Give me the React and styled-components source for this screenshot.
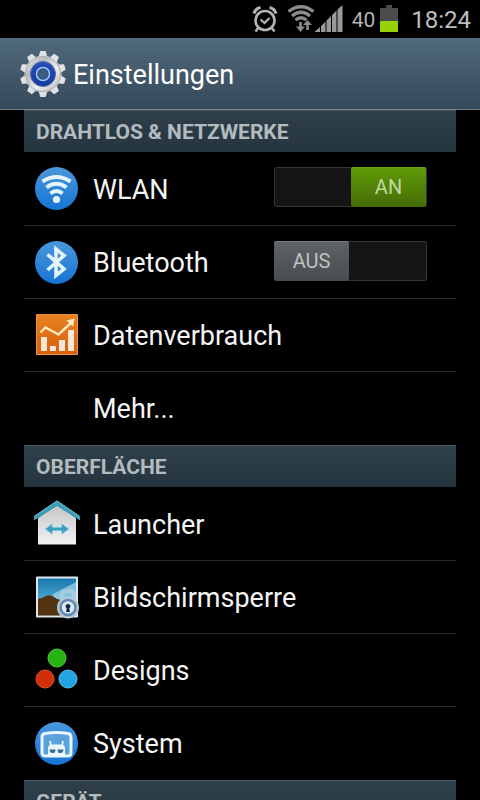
import { useState } from 'react';
import styled, { createGlobalStyle } from 'styled-components';

const GlobalStyle = createGlobalStyle`
    * {
        box-sizing: border-box;
    }
    body {
        margin: 0;
        background: #000;
        font-family: Roboto, "Liberation Sans", sans-serif;
    }
`
const Screen = styled.div`
    height: 100vh;
    display: flex;
    flex-direction: column;
    overflow: hidden;
    background: #000;
    color: #f4f4f4;
`
const StatusBar = styled.div`
    flex: none;
    height: 38px;
    padding-right: 9px;
    display: flex;
    align-items: center;
    justify-content: flex-end;
    color: #b4b4b4;
`
const StatusIcons = styled.div`
    display: flex;
    align-items: center;
    margin-right: 9px;
`
const Signals = styled.span`
    display: flex;
    margin-left: 9px;
`
const BatteryLevel = styled.span`
    padding-top: 2px;
    font-size: 21px;
    line-height: 24px;
    margin-right: 5px;
`
const Clock = styled.time`
    padding-top: 2px;
    font-size: 24px;
    line-height: 28px;
    margin-left: 13px;
    color: #bebebe;
`
const Header = styled.header`
    flex: none;
    height: 72px;
    padding-left: 20px;
    display: flex;
    align-items: center;
    gap: 7px;
    background: linear-gradient(#506a7b, #34485a);
    border-top: 1px solid #54707e;
    border-bottom: 1px solid #75838c;
`
const Title = styled.h1`
    margin: 0;
    padding-top: 2px;
    font-size: 27px;
    line-height: 32px;
    font-weight: 400;
    color: #fff;
`
const List = styled.main`
    flex: 1;
    min-height: 0;
    padding: 0 24px;
    overflow-y: auto;
    scrollbar-width: none;
`
const SectionTitle = styled.h2`
    height: 42px;
    margin: 0;
    padding: 2px 12px 0;
    font-size: 21px;
    line-height: 38px;
    font-weight: 700;
    color: #b3bbbf;
    background: linear-gradient(#2f404b, #24353e);
    border-top: 1px solid #46555e;
`
const Rows = styled.ul`
    margin: 0;
    padding: 0 0 1px;
    list-style: none;
`
const Row = styled.li`
    display: flex;
    align-items: center;
    height: 73px;
    padding-right: 29px;

    & + & {
        border-top: 1px solid #2b2b2b;
    }
`
const RowButton = styled.button`
    flex: 1;
    height: 100%;
    padding: 0 0 0 9px;
    display: flex;
    align-items: center;
    gap: 13px;
    border: none;
    background: none;
    color: inherit;
    font-family: inherit;
    font-size: 27px;
    line-height: 32px;
    text-align: left;
    cursor: pointer;
`
const IconSlot = styled.span`
    flex: none;
    width: 47px;
    height: 47px;
`
const RowLabel = styled.span`
    padding-top: 2px;
`
const Switch = styled.label`
    position: relative;
    display: flex;
    justify-content: ${(props) => (props.$on ? 'flex-end' : 'flex-start')};
    width: 153px;
    height: 40px;
    margin-bottom: 3px;
    padding-right: 1px;
    background: #151515;
    box-shadow: inset 0 0 0 1px #353535;
    border-radius: 3px;
    cursor: pointer;
`
const SwitchInput = styled.input`
    position: absolute;
    inset: 0;
    width: 100%;
    height: 100%;
    margin: 0;
    opacity: 0;
    cursor: pointer;
`
const Thumb = styled.span`
    width: 75px;
    border-radius: 3px;
    font-size: 20px;
    line-height: 40px;
    text-align: center;
    color: ${(props) => (props.$on ? '#c0d79d' : '#bfc1c2')};
    background: ${(props) => (props.$on ? 'linear-gradient(#609b06, #446c08)' : 'linear-gradient(#5f6365, #484c4e)')};
    box-shadow: inset 0 1px 0 ${(props) => (props.$on ? '#6ba51a' : '#74787a')};
`

const AlarmIcon = () => (
    <svg width="26" height="28" viewBox="0 0 26 28" fill="none" stroke="currentColor">
        <circle cx="13" cy="15.500" r="9.500" strokeWidth="2.600" />
        <path d="M8.500 14.500l4 3.500 5-5" strokeWidth="2.200" />
        <path d="M2 8.500C3 5 5 3.200 8.500 2.500M24 8.500C23 5 21 3.200 17.500 2.500" strokeWidth="3.200" />
        <path d="M6.500 22.500L3.500 26.500M19.500 22.500l3 4" strokeWidth="2.400" />
    </svg>
)

const WifiStatusIcon = () => (
    <svg width="28" height="28" viewBox="0 0 28 28" fill="none" stroke="#8b8b8b">
        <path d="M1.500 6.500Q14 -3 26.500 6.500M5 11Q14 3.500 23 11M8.500 15Q14 10.500 19.500 15" strokeWidth="3.200" />
        <path d="M13.500 17v6M20.500 25v-6" strokeWidth="2.600" />
        <path d="M9 21.500h9l-4.500 5.500zM16 20h9l-4.500-5z" fill="#8b8b8b" stroke="none" />
    </svg>
)

const SignalIcon = () => (
    <svg width="28" height="28" viewBox="0 0 28 28" fill="#999">
        <path d="M0 27V26.500L5 22V27zM6 27V21L10.500 16.500V27zM11.500 27V15.500L16 11V27zM17 27V10L21.500 5.500V27zM22.500 27V4.500L27.500 0V27z" />
    </svg>
)

const BatteryIcon = () => (
    <svg width="18" height="28" viewBox="0 0 18 28">
        <path d="M6 0h6v3h6v13H0V3h6z" fill="#4b4b4b" />
        <path d="M0 16h18v11H0z" fill="#98d009" />
    </svg>
)

const teeth = [0, 36, 72, 108, 144, 180, 216, 252, 288, 324]

const GearIcon = () => (
    <svg width="46" height="48" viewBox="0 0 46 48">
        <defs>
            <linearGradient id="gearMetal" x1="0" y1="0" x2="1" y2="1">
                <stop offset="0" stopColor="#f4f4f6" />
                <stop offset=".3" stopColor="#b9bbc0" />
                <stop offset=".6" stopColor="#eeeeee" />
                <stop offset="1" stopColor="#b6b4b4" />
            </linearGradient>
            <linearGradient id="gearBlue" x1="0" y1="0" x2="0" y2="1">
                <stop offset="0" stopColor="#2450be" />
                <stop offset="1" stopColor="#183a9c" />
            </linearGradient>
        </defs>
        {teeth.map((angle) => (
            <path key={angle} d="M19.500 6L20.500 1.500h5L26.500 6z" fill="#dfe3e9" stroke="#dfe3e9" strokeLinejoin="round" transform={`rotate(${angle} 23 24)`} />
        ))}
        <circle cx="23" cy="24" r="18.500" fill="#dfe3e9" />
        <circle cx="23" cy="24" r="17.500" fill="url(#gearMetal)" stroke="#a9a7a2" />
        <circle cx="23" cy="24" r="12.500" fill="url(#gearBlue)" stroke="#5269a8" />
        <circle cx="23" cy="24" r="6.500" fill="#24509f" stroke="#9fc5ee" strokeWidth="1.600" />
        <circle cx="23" cy="24" r="4.500" fill="#415c76" />
    </svg>
)

const BlueDisc = ({ id }) => (
    <>
        <defs>
            <linearGradient id={id} x1="0" y1="0" x2="0" y2="1">
                <stop offset="0" stopColor="#4a97dc" />
                <stop offset="1" stopColor="#1674d4" />
            </linearGradient>
        </defs>
        <circle cx="23.500" cy="23.500" r="21.500" fill={`url(#${id})`} />
    </>
)

const WlanIcon = () => (
    <svg width="47" height="47" viewBox="0 0 47 47">
        <BlueDisc id="discWlan" />
        <path d="M9.500 16.500Q23.500 7.500 37.500 16.500M13.500 22.500Q23.500 15 33.500 22.500M17.500 28.500Q23.500 23.500 29.500 28.500" fill="none" stroke="#e4f5fa" strokeWidth="4" />
        <circle cx="23.500" cy="34.500" r="3.600" fill="#e4f5fa" />
    </svg>
)

const BluetoothIcon = () => (
    <svg width="47" height="47" viewBox="0 0 47 47">
        <BlueDisc id="discBluetooth" />
        <path d="M14.500 15.500L31 30l-8 6.500V10l8 6.500L14.500 31" fill="none" stroke="#e4f5fa" strokeWidth="3.600" />
    </svg>
)

const DataIcon = () => (
    <svg width="47" height="47" viewBox="0 0 47 47">
        <defs>
            <linearGradient id="dataOrange" x1="0" y1="0" x2="0" y2="1">
                <stop offset="0" stopColor="#e78222" />
                <stop offset="1" stopColor="#d95f08" />
            </linearGradient>
        </defs>
        <path d="M3.500 2.500h41v40h-41z" fill="url(#dataOrange)" stroke="#e9924a" />
        <path d="M8 25h6v14H8zM17 34h6v5h-6zM26 28h6v11h-6zM35 18h6v21h-6z" fill="#f7e6dc" />
        <path d="M7.500 20.500l5-5 13 7L39 10" fill="none" stroke="#ffe9bd" strokeWidth="2.400" />
        <path d="M33.500 8.500L41.500 6.500 40 14.500z" fill="#ffe9bd" />
    </svg>
)

const LauncherIcon = () => (
    <svg width="47" height="47" viewBox="0 0 47 47">
        <defs>
            <linearGradient id="houseWall" x1="0" y1="0" x2="0" y2="1">
                <stop offset="0" stopColor="#c3c6c8" />
                <stop offset="1" stopColor="#f2f2f2" />
            </linearGradient>
        </defs>
        <path d="M5 18L24 5l19 13v26.500H5z" fill="url(#houseWall)" />
        <path d="M1 16L24 .5 47 16v4.500L24 6 1 20.500z" fill="#3d9cb8" />
        <path d="M2 16L24 1 46 16" fill="none" stroke="#6cc0d5" />
        <path d="M12 29l7.500-5.500v3.700h9v-3.700L36 29l-7.500 5.500v-3.700h-9v3.700z" fill="#399fbd" stroke="#aee0ec" strokeWidth=".6" />
    </svg>
)

const LockScreenIcon = () => (
    <svg width="47" height="47" viewBox="0 0 47 47">
        <defs>
            <linearGradient id="lockSky" x1="0" y1="0" x2="0" y2="1">
                <stop offset="0" stopColor="#1677ad" />
                <stop offset="1" stopColor="#7ec8ec" />
            </linearGradient>
        </defs>
        <rect x="3" y="2.500" width="42" height="41" rx="1" fill="#dfe8ec" />
        <path d="M5 4.500h38v37H5z" fill="url(#lockSky)" />
        <path d="M20 20L43 8v17H20z" fill="#b2e2f5" opacity=".6" />
        <path d="M5 25q5-1 8-3 4-2 8 1 5 4 9 3 6-4 13 1v14.500H5z" fill="#543310" />
        <path d="M28.500 26v-3q0-6 6.500-6t6.500 6v3" fill="none" stroke="#a8ccdd" strokeWidth="3.800" />
        <circle cx="35" cy="33.500" r="11" fill="#b4c8d7" />
        <circle cx="35" cy="33.500" r="7.500" fill="#dfe8ef" stroke="#6389b3" strokeWidth="2.600" />
        <path d="M32.500 32.500a2.500 2.500 0 1 1 5 0l-1.200 2 .7 3.500h-4l.7-3.500z" fill="#102b4d" />
    </svg>
)

const DesignsIcon = () => (
    <svg width="47" height="47" viewBox="0 0 47 47">
        <circle cx="24" cy="11" r="9" fill="#25b311" stroke="#53cb3f" />
        <circle cx="12" cy="32" r="9" fill="#cf3009" stroke="#dc5230" />
        <circle cx="35" cy="32" r="9" fill="#22a4e0" stroke="#57bce9" />
    </svg>
)

const SystemIcon = () => (
    <svg width="47" height="47" viewBox="0 0 47 47">
        <BlueDisc id="discSystem" />
        <path d="M12 13.500Q23.500 11.500 35 13.500 38 14 38 17v16q0 3-3.500 3h-22Q9 36 9 33V17q0-3 3-3.500z" fill="#5aa2dc" stroke="#e8f5fb" strokeWidth="3" />
        <path d="M18 26l-1-5M29 26l1-5" fill="none" stroke="#e8f5fb" strokeWidth="1.800" />
        <path d="M15 37V28q0-3.500 4-3.500h9q4 0 4 3.500v9z" fill="#e8f5fb" />
        <path d="M16.500 29.500h6q0 3.800-3 3.600-2.700 0-3-3.600zM24.500 29.500h6q-.3 3.600-3 3.600-3 .2-3-3.600z" fill="#386c98" />
    </svg>
)

const SettingRow = ({ icon, label, children }) => (
    <Row>
        <RowButton type="button">
            <IconSlot>{icon}</IconSlot>
            <RowLabel>{label}</RowLabel>
        </RowButton>
        {children}
    </Row>
)

const Toggle = ({ name, initial }) => {
    const [on, setOn] = useState(initial);

    return (
        <Switch $on={on}>
            <SwitchInput type="checkbox" role="switch" aria-label={name} checked={on} onChange={(e) => setOn(e.target.checked)} />
            <Thumb $on={on}>{on ? 'AN' : 'AUS'}</Thumb>
        </Switch>
    )
}

const App = () => {
    return (
        <Screen>
            <GlobalStyle />
            <StatusBar>
                <StatusIcons>
                    <AlarmIcon />
                    <Signals>
                        <WifiStatusIcon />
                        <SignalIcon />
                    </Signals>
                </StatusIcons>
                <BatteryLevel>40</BatteryLevel>
                <BatteryIcon />
                <Clock>18:24</Clock>
            </StatusBar>
            <Header>
                <GearIcon />
                <Title>Einstellungen</Title>
            </Header>
            <List>
                <SectionTitle>DRAHTLOS &amp; NETZWERKE</SectionTitle>
                <Rows>
                    <SettingRow icon={<WlanIcon />} label="WLAN">
                        <Toggle name="WLAN" initial={true} />
                    </SettingRow>
                    <SettingRow icon={<BluetoothIcon />} label="Bluetooth">
                        <Toggle name="Bluetooth" initial={false} />
                    </SettingRow>
                    <SettingRow icon={<DataIcon />} label="Datenverbrauch" />
                    <SettingRow label="Mehr..." />
                </Rows>
                <SectionTitle>OBERFLÄCHE</SectionTitle>
                <Rows>
                    <SettingRow icon={<LauncherIcon />} label="Launcher" />
                    <SettingRow icon={<LockScreenIcon />} label="Bildschirmsperre" />
                    <SettingRow icon={<DesignsIcon />} label="Designs" />
                    <SettingRow icon={<SystemIcon />} label="System" />
                </Rows>
                <SectionTitle>GERÄT</SectionTitle>
            </List>
        </Screen>
    )
}

export default App;
